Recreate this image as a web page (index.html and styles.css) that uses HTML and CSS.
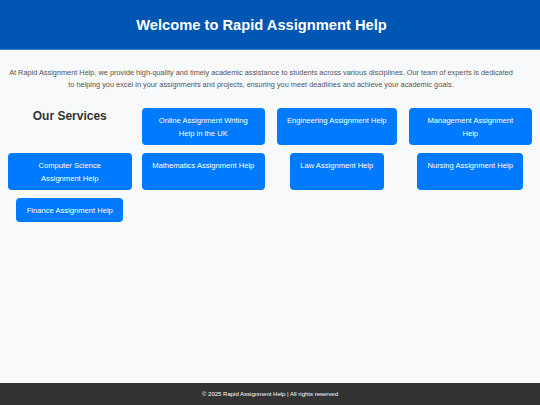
FILE: index.html
```html
<!DOCTYPE html>
<html>
<head>
<meta charset="utf-8">
<link rel="stylesheet" href="styles.css">
</head>
<body>
<header class="site-header">
  <h1 class="title">Welcome to Rapid Assignment Help</h1>
</header>
<main class="content">
  <p class="intro">At Rapid Assignment Help, we provide high-quality and timely academic assistance to students across various disciplines. Our team of experts is dedicated to helping you excel in your assignments and projects, ensuring you meet deadlines and achieve your academic goals.</p>
  <section class="services">
    <h2 class="services-title">Our Services</h2>
    <div class="service">Online Assignment Writing Help in the UK</div>
    <div class="service">Engineering Assignment Help</div>
    <div class="service">Management Assignment Help</div>
    <div class="service">Computer Science Assignment Help</div>
    <div class="service">Mathematics Assignment Help</div>
    <div class="service">Law Assignment Help</div>
    <div class="service">Nursing Assignment Help</div>
    <div class="service">Finance Assignment Help</div>
  </section>
</main>
<footer class="site-footer">&copy; 2025 Rapid Assignment Help | All rights reserved</footer>
</body>
</html>
```
FILE: styles.css
```css
html, body {
  margin: 0;
  padding: 0;
  height: 100%;
}
body {
  font-family: "Liberation Sans", Arial, sans-serif;
  background: #f8f9fa;
  color: #333;
  display: flex;
  flex-direction: column;
}
.site-header {
  background: #0056b3;
  height: 49px;
  border-bottom: 1px solid #3a86d6;
  padding-right: 17px;
  display: flex;
  align-items: center;
  justify-content: center;
}
.title {
  margin: 0;
  color: #fff;
  font-size: 14.7px;
  font-weight: bold;
}
.content {
  flex: 1;
  padding: 0 8px;
}
.intro {
  margin: 17px 18px 0 0;
  text-align: center;
  color: #555;
  font-size: 7.35px;
  line-height: 12px;
}
.services {
  margin-top: 17px;
  display: grid;
  grid-template-columns: repeat(4, 1fr);
  column-gap: 10px;
  row-gap: 8px;
  justify-items: center;
}
.services-title {
  margin: 0;
  font-size: 12px;
  line-height: 16px;
  color: #333;
}
.service {
  background: #007bff;
  color: #fff;
  border-radius: 4px;
  padding: 5.5px 10.4px;
  font-size: 7.6px;
  line-height: 13px;
  text-align: center;
}
.site-footer {
  background: #333;
  color: #fff;
  height: 22px;
  line-height: 22px;
  text-align: center;
  font-size: 6px;
}
```
